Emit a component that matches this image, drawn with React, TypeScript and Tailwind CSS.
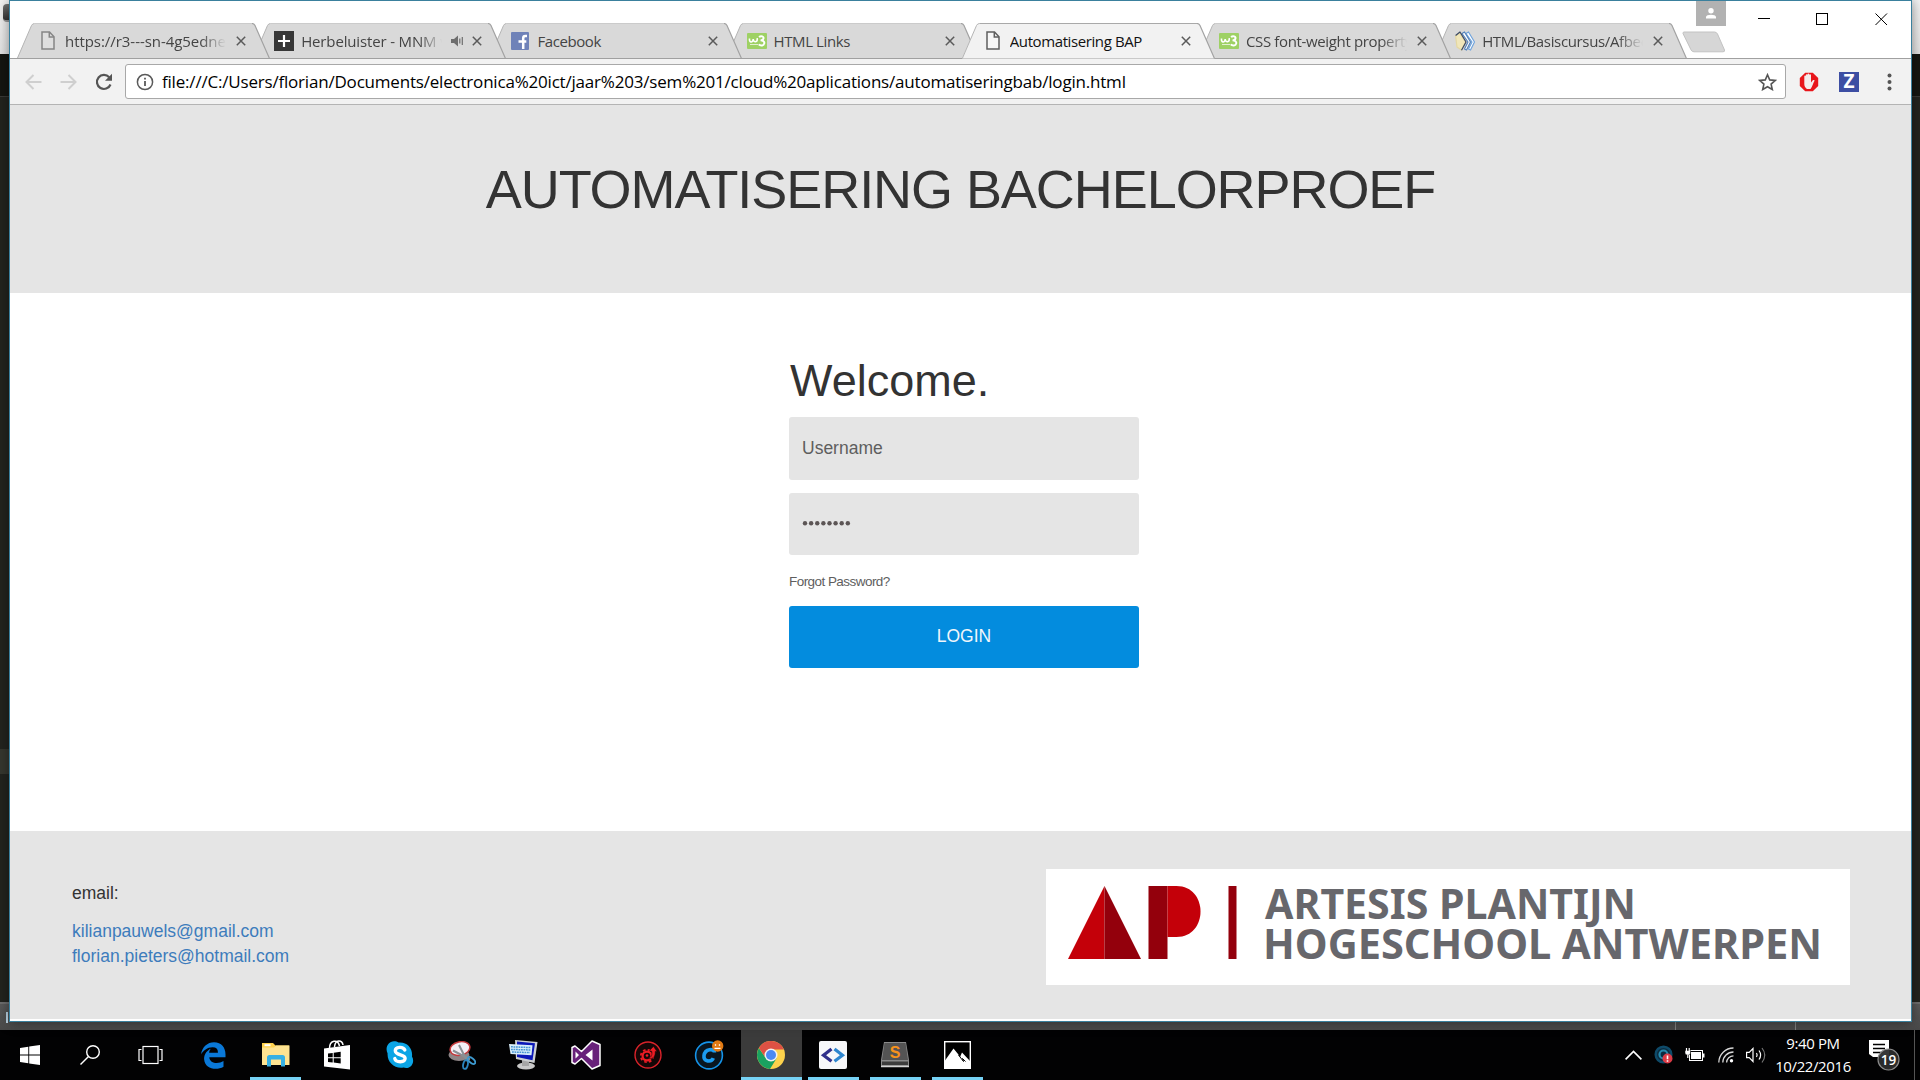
import React from "react";

type Kids = { children?: React.ReactNode };

/* ---------- favicons ---------- */

const PageIcon = ({ dark }: { dark?: boolean }) => (
  <svg width="14" height="19" viewBox="0 0 14 19" fill={dark ? "#f7f7f7" : "#dedede"} stroke={dark ? "#5f5f5f" : "#858585"} strokeWidth="1.5">
    <path d="M1 1h7.5L13 5.8V18H1z" />
    <path d="M8.3 1v5H13" fill="none" />
  </svg>
);

const PlusIcon = () => (
  <svg width="20" height="20" viewBox="0 0 20 20">
    <rect width="20" height="20" fill="#373737" />
    <path d="M10 4v12M4 10h12" stroke="#fff" strokeWidth="2.2" />
  </svg>
);

const FacebookIcon = () => (
  <svg width="18" height="18" viewBox="0 0 18 18">
    <rect width="18" height="18" rx="1" fill="#6f82b8" />
    <path d="M16 4h-1.6c-1.6 0-2.2.8-2.2 2.2V17M7.500 9.500h7.800" stroke="#fff" strokeWidth="2.500" fill="none" />
  </svg>
);

const W3Icon = () => (
  <svg width="20" height="16" viewBox="0 0 20 16">
    <rect width="20" height="16" rx="1" fill="#9ed164" />
    <path d="M2.500 5.500c-.5 4.500 3.500 4.500 3.700.6.300 3.900 4.600 3.500 4-1" fill="none" stroke="#fff" strokeWidth="1.600" />
    <path d="M12 4c2-1.500 5-.8 4.500 1.500-.3 1.500-2 1.900-3 1.900 2.500 0 4.200 1 3.800 3-.5 2.600-4 2.600-5.600 1" fill="none" stroke="#fff" strokeWidth="1.900" />
    <path d="M3 11.500h8" stroke="#fff" strokeWidth="1" opacity=".7" />
  </svg>
);

const BooksIcon = () => (
  <svg width="20" height="20" viewBox="0 0 20 20" strokeWidth="1.200" strokeLinejoin="round">
    <path d="M11 2.500l2.500-1.500L19.500 11l-4 8-2-1L17 11z" fill="#fff" stroke="#6fa3dc" />
    <path d="M7 2.500l2.500-1.500L15.500 11l-4 8-2-1L13 11z" fill="#fff" stroke="#5583bb" />
    <path d="M.6 5L4.500 2l6 9L6.500 19l-4.500-3z" fill="#f0e6ba" stroke="#e4d7a1" />
    <path d="M.6 4.500L5 1l6 10-4.500 8.300" fill="none" stroke="#3b4a66" />
  </svg>
);

const Speaker = () => (
  <svg width="13" height="12" viewBox="0 0 13 12" fill="#6e6e6e">
    <path d="M0 4h3l4-3.500v11L3 8H0z" />
    <path d="M8.800 3.500v5M11.300 2v8" stroke="#6e6e6e" strokeWidth="1.200" />
  </svg>
);

/* ---------- tab strip ---------- */

type TabData = {
  title: string;
  icon: React.ReactNode;
  z: string;
  spacing: string;
  active?: boolean;
  fade?: boolean;
  audio?: boolean;
};

const tabs: TabData[] = [
  { title: "https://r3---sn-4g5ednek", icon: <PageIcon />, z: "z-[7]", spacing: "tracking-[-0.05px]", fade: true },
  { title: "Herbeluister - MNM v", icon: <PlusIcon />, z: "z-[6]", spacing: "tracking-[-0.15px]", fade: true, audio: true },
  { title: "Facebook", icon: <FacebookIcon />, z: "z-[5]", spacing: "tracking-[-0.4px]" },
  { title: "HTML Links", icon: <W3Icon />, z: "z-[4]", spacing: "tracking-[-0.4px]" },
  { title: "Automatisering BAP", icon: <PageIcon dark />, z: "z-[8]", spacing: "tracking-[-0.4px]", active: true },
  { title: "CSS font-weight property", icon: <W3Icon />, z: "z-[3]", spacing: "tracking-[-0.35px]", fade: true },
  { title: "HTML/Basiscursus/Afbeeld", icon: <BooksIcon />, z: "z-[2]", spacing: "tracking-[-0.35px]", fade: true },
];

function Tab({ tab }: { tab: TabData }) {
  const fill = tab.active ? "#f2f2f2" : "#d9d9d9";
  return (
    <div className={`relative -mr-4 flex h-9 w-[252.2px] shrink-0 items-center pb-px pl-[21px] ${tab.z}`}>
      <svg className="absolute inset-0" width="253" height="36" viewBox="0 0 253 36">
        <path d="M0 35.500L14.500 2.500Q15.500.5 17.500.5H235Q237 .5 238 2.500L252.500 35.500z" fill={fill} />
        <path d="M.3 35.500L14.500 2.500Q15.500.5 17.500.5" fill="none" stroke="#b5b5b5" />
        <path d="M17.500.5H235" stroke={tab.active ? "#a9a9a9" : "#cbcbcb"} />
        <path d="M235 .5Q237 .5 238 2.500L252.500 35.500" fill="none" stroke="#a2a2a2" strokeWidth="1.200" />
        {!tab.active && <path d="M0 35.500H253" stroke="#a0a0a0" />}
      </svg>
      <span className="relative flex w-5 shrink-0 justify-center">{tab.icon}</span>
      <span
        className={`relative ml-[7px] overflow-hidden whitespace-nowrap text-[15px] leading-5 ${tab.spacing} ${tab.audio ? "w-[141px]" : "w-[161px]"} ${
          tab.active ? "text-[#111]" : "text-[#444]"
        } ${tab.fade ? "[mask-image:linear-gradient(to_right,black_84%,transparent)]" : ""}`}
      >
        {tab.title}
      </span>
      {tab.audio && (
        <span className="relative ml-[9px] w-3">
          <Speaker />
        </span>
      )}
      <svg className={`relative ${tab.audio ? "ml-[9px]" : "ml-[10px]"}`} width="10" height="10" viewBox="0 0 10 10" stroke="#5a5a5a" strokeWidth="1.500">
        <path d="M.8.8l8.400 8.400M9.200.8L.8 9.200" />
      </svg>
    </div>
  );
}

function TitleBar() {
  return (
    <div className="flex h-[58px] items-start border-b border-[#a0a0a0] bg-white">
      <div className="-mb-px flex pl-[7px] pt-[22px]">
        {tabs.map((t) => (
          <Tab key={t.title} tab={t} />
        ))}
      </div>
      <svg className="-mr-[44px] ml-[12px] mt-[30px] shrink-0" width="44" height="22" viewBox="0 0 44 22">
        <path d="M2 1h30.500q2 0 3 2l7 16q.500 1.800-1.500 1.800H12q-2 0-3-2L1 2.500Q.8 1 2 1z" fill="#d6d6d6" stroke="#c2c2c2" />
      </svg>
      <div className="ml-auto flex items-start pr-[23px]">
        <div className="flex h-[25px] w-[30px] items-center justify-center bg-[#b2b2b2]">
          <svg width="10" height="11" viewBox="0 0 10 11" fill="#fff">
            <circle cx="5" cy="2.700" r="2.700" />
            <path d="M0 10.500V9c0-3 10-3 10 0v1.500z" />
          </svg>
        </div>
        <svg className="ml-8 mt-3" width="130" height="13" viewBox="0 0 130 13" fill="none" stroke="#000">
          <path d="M0 5.500h12" />
          <rect x="58.500" y=".5" width="11" height="11" />
          <path d="M117.500.5l11.500 11.500M129 .5L117.500 12" />
        </svg>
      </div>
    </div>
  );
}

/* ---------- toolbar ---------- */

function Toolbar() {
  return (
    <div className="flex h-[46px] items-center border-b border-[#b4b4b4] bg-[#f2f2f2] pl-[15px]">
      <svg width="17" height="16" viewBox="0 0 17 16" fill="none" stroke="#cfcfcf" strokeWidth="2">
        <path d="M16.500 8H2M8.500 1L1.500 8l7 7" />
      </svg>
      <svg className="ml-[18px]" width="17" height="16" viewBox="0 0 17 16" fill="none" stroke="#cfcfcf" strokeWidth="2">
        <path d="M.5 8H15M8.500 1l7 7-7 7" />
      </svg>
      <svg className="ml-[18px]" width="18" height="18" viewBox="0 0 18 18">
        <path d="M15.500 11.500A7 7 0 1 1 14.200 4.300" fill="none" stroke="#555" strokeWidth="2.200" />
        <path d="M17 .8v7h-7z" fill="#555" />
      </svg>
      <div className="ml-3 flex h-[35px] w-[1661px] items-center rounded-[3px] border border-[#a8a8a8] bg-white pl-[10px] pr-[8px]">
        <svg width="18" height="18" viewBox="0 0 18 18" fill="none" stroke="#5a5a5a">
          <circle cx="9" cy="9" r="7.600" strokeWidth="1.500" />
          <path d="M9 8v5M9 4.800v1.800" strokeWidth="1.800" />
        </svg>
        <span className="ml-[8px] flex-1 whitespace-nowrap text-[17px] leading-6 text-black tracking-[-0.195px]">
          file:///C:/Users/florian/Documents/electronica%20ict/jaar%203/sem%201/cloud%20aplications/automatiseringbab/login.html
        </span>
        <svg width="19" height="18" viewBox="0 0 19 18" fill="none" stroke="#555" strokeWidth="1.600">
          <path d="M9.500 1.800l2.200 5.100 5.600.5-4.200 3.700 1.200 5.400-4.800-2.800-4.800 2.800 1.200-5.400L1.700 7.400l5.600-.5z" />
        </svg>
      </div>
      <svg className="ml-[13px]" width="20" height="20" viewBox="0 0 20 20">
        <path d="M6.200.7h7.600l5.400 5.400v7.800l-5.400 5.400H6.200L.8 13.900V6.100z" fill="#e8161b" />
        <path d="M5.300 9.200V4.300c0-1 1.500-1 1.500 0v4V3c0-1.100 1.700-1.100 1.700 0v5-5.800c0-1.100 1.800-1.100 1.800 0V8 3c0-1.100 1.700-1.100 1.700 0v7.500l1.800-2.200c.8-.7 2.200-.3 1.600.7-1.200 2-2.200 6-3.900 8H8c-1.800-1.300-2.700-3-2.700-5z" fill="#f4ecec" />
      </svg>
      <div className="ml-[20px] flex h-5 w-5 items-center justify-center bg-[#3d4ea3] text-[19px] font-bold leading-none text-white">Z</div>
      <svg className="ml-[28px]" width="5" height="18" viewBox="0 0 5 18" fill="#555">
        <circle cx="2.500" cy="2.500" r="2" />
        <circle cx="2.500" cy="9" r="2" />
        <circle cx="2.500" cy="15.500" r="2" />
      </svg>
    </div>
  );
}

/* ---------- web page ---------- */

function ApLogo() {
  return (
    <svg width="804" height="116" viewBox="0 0 804 116" className="bg-white">
      <path d="M58.500 17L22 90h36.500z" fill="#c40009" />
      <path d="M58.500 17L95 90H58.500z" fill="#93000c" />
      <rect x="102.500" y="17" width="19" height="73" fill="#93000c" />
      <path d="M121.500 17h9c32 0 32 51 0 51h-9z" fill="#c40009" />
      <rect x="182.500" y="17" width="8" height="73" fill="#93000c" />
      <g fill="#67676c" fontFamily="'Noto Sans', sans-serif" fontWeight="700" fontSize="42">
        <text x="219" y="49.500" textLength="371" lengthAdjust="spacingAndGlyphs">ARTESIS PLANTIJN</text>
        <text x="217" y="90" textLength="559" lengthAdjust="spacingAndGlyphs">HOGESCHOOL ANTWERPEN</text>
      </g>
    </svg>
  );
}

function WebPage() {
  return (
    <div className="flex flex-1 flex-col bg-white font-['Liberation_Sans',Arial,sans-serif] text-[17.5px] leading-[25px] text-[#333]">
      <header className="flex h-[188px] justify-center bg-[#e5e5e5] pt-[54px]">
        <h1 className="whitespace-nowrap text-[54px] leading-[60px] tracking-[-1.06px]">AUTOMATISERING BACHELORPROEF</h1>
      </header>
      <main className="flex h-[538px] flex-col pl-[779px] pt-[63px]">
        <h2 className="pl-px text-[45px] leading-[50px]">Welcome.</h2>
        <form className="flex w-[350px] flex-col pt-[11px] text-[#5e5e5e]">
          <div className="flex h-[63px] items-center rounded-[3px] bg-[#e5e5e5] pl-[13px]">Username</div>
          <div className="mt-[13px] flex h-[62px] items-center rounded-[3px] bg-[#e5e5e5] pl-[13px]">
            <svg width="50" height="6" viewBox="0 0 50 6" fill="#5c5555">
              {[0, 1, 2, 3, 4, 5, 6, 7].map((i) => (
                <circle key={i} cx={3 + i * 6.12} cy="2.200" r="2.200" />
              ))}
            </svg>
          </div>
          <a className="mt-[18px] text-[13.5px] leading-[18px] tracking-[-0.55px]">Forgot Password?</a>
          <button type="button" className="mt-[15px] h-[62px] rounded-[3px] bg-[#038cde] pb-[2px] text-[17.5px] text-[#f0f6fb]">
            LOGIN
          </button>
        </form>
      </main>
      <footer className="flex h-[188px] items-start justify-between bg-[#e5e5e5] pl-[62px] pr-[61px]">
        <div className="pt-[50px]">
          <p className="mb-[13px]">email:</p>
          <p className="text-[#3d7cbc]">kilianpauwels@gmail.com</p>
          <p className="text-[#3d7cbc]">florian.pieters@hotmail.com</p>
        </div>
        <div className="pt-[38px]">
          <ApLogo />
        </div>
      </footer>
    </div>
  );
}

/* ---------- desktop behind the browser ---------- */

function Backdrop() {
  return (
    <div className="flex h-full flex-col">
      <div className="flex h-[54px] items-start bg-gradient-to-b from-[#f4f4f4] to-[#e4e4e4] pl-[3px] pt-1">
        <div className="h-[18px] w-3 rounded-sm border-b-2 border-[#999] bg-gradient-to-b from-[#777] to-[#333]" />
      </div>
      <div className="h-[42px] bg-[#151611]" />
      <div className="h-[653px] border-t border-[#3a3a37] bg-[#23241f]" />
      <div className="flex h-[25px] justify-between">
        <div className="w-20 bg-[#36372f]" />
        <div className="w-20 bg-[#23241f]" />
      </div>
      <div className="h-[228px] bg-[#23241f]" />
      <div className="flex flex-1 border-t-2 border-[#6f6f6f] bg-gradient-to-b from-[#5a5a5a] to-[#494949]">
        <div className="ml-[6px] mt-2 h-[11px] w-[2px] bg-[#bcd5e6]" />
        <div className="ml-[1667px] w-px bg-[#808080]" />
        <div className="ml-[119px] w-px bg-[#808080]" />
      </div>
    </div>
  );
}

/* ---------- taskbar ---------- */

const WindowsLogo = () => (
  <svg width="20" height="20" viewBox="0 0 20 20" fill="#fff">
    <path d="M0 2.900L8.300 1.700V9.500H0zM9.200 1.600L20 0v9.500H9.200zM0 10.400h8.300v7.900L0 17.100zM9.200 10.400H20V20L9.200 18.400z" />
  </svg>
);

const SearchGlyph = () => (
  <svg width="20" height="20" viewBox="0 0 20 20" fill="none" stroke="#fff" strokeWidth="1.400">
    <circle cx="13" cy="7" r="6.300" />
    <path d="M8.500 11.500L.5 19.500" />
  </svg>
);

const TaskView = () => (
  <svg width="25" height="20" viewBox="0 0 25 20" fill="none" stroke="#fff" strokeWidth="1.200">
    <rect x="5" y="1.500" width="15" height="17" />
    <path d="M3.500 4.500H1v11h2.500M21.500 4.500H24v11h-2.500" />
  </svg>
);

const Edge = () => (
  <svg width="25" height="27" viewBox="0 0 25 27" fill="#0a78d7">
    <path d="M0 12.500C1 5 6.500.3 13 .3c7.500 0 11.500 5.500 11.500 12v3H8.300c.4 6.700 9.500 7 14.200 3.800v5.700c-7 4-18.700 2.400-19.400-7.500C2.800 12 6.500 8 9.800 6.700 8.600 8 8.200 9.500 8.200 10.800h8.700c.2-3.500-1.500-5.500-5.200-5.500C6.500 5.200 2.300 8.600 0 12.500z" />
  </svg>
);

const Explorer = () => (
  <svg width="28" height="25" viewBox="0 0 28 25">
    <path d="M0 0h11l2.500 2.500H27V6H0z" fill="#ffd24d" />
    <rect x="2.500" y="1.200" width="6" height="2" fill="#fff" />
    <path d="M0 4.500h12l2-2h13.500V22H0z" fill="#fee391" />
    <path d="M5 23.500v-9q0-2.500 2.500-2.500h13q2.500 0 2.500 2.500v9h-4v-7H9v7z" fill="#36b0e4" />
  </svg>
);

const Store = () => (
  <svg width="27" height="30" viewBox="0 0 27 30">
    <path d="M5.500 8.500C5.500-.5 14-1 15.500 6M10.500 7C11-1 18.500-.5 19 5" fill="none" stroke="#fff" strokeWidth="1.500" />
    <path d="M0 8.500L26 5v24.500L0 26.500z" fill="#fff" />
    <path d="M4 13.500l4.700-.6v4.300H4zM9.700 12.800l7-1v5.400h-7zM4 18.200h4.700v4.300L4 22zM9.700 18.200h7v5.400l-7-1z" fill="#000" />
  </svg>
);

const Skype = () => (
  <svg width="28" height="28" viewBox="0 0 28 28">
    <path d="M8 .3c2 0 3.300.5 4.600 1.300C21 .6 27 7.500 26 15.500c3.500 6-1.500 13.500-8.600 11C8.500 28 1 21 1.600 12.500-1.200 7 2 .5 8 .3z" fill="#0ba5e6" />
    <path d="M18.800 9C17.200 5.300 9.300 5.500 9.300 9.800c0 5 9.800 3.100 9.800 7.500 0 4.600-9.200 4.400-10.300.3" fill="none" stroke="#fff" strokeWidth="3.400" strokeLinecap="round" />
  </svg>
);

const Snipping = () => (
  <svg width="28" height="29" viewBox="0 0 28 29">
    <ellipse cx="11" cy="14" rx="10.500" ry="6" fill="#8e8587" />
    <ellipse cx="12" cy="7.500" rx="10" ry="6.700" fill="#f4eef5" stroke="#c5393c" strokeWidth="1.500" transform="rotate(-12 12 7.500)" />
    <path d="M11 4l8 16M5 9.500l17 9" stroke="#8a8f94" strokeWidth="2" />
    <ellipse cx="17.500" cy="23.500" rx="2.300" ry="4.500" fill="none" stroke="#2c86bf" strokeWidth="1.800" transform="rotate(12 17.500 23.500)" />
    <ellipse cx="23.500" cy="19.500" rx="2.300" ry="4.500" fill="none" stroke="#3d9ad0" strokeWidth="1.800" transform="rotate(-50 23.500 19.500)" />
  </svg>
);

const RemoteKeyboard = () => (
  <svg width="29" height="30" viewBox="0 0 29 30">
    <ellipse cx="17" cy="26" rx="9" ry="3.500" fill="#c9c9c9" />
    <path d="M13 20h7v6h-7z" fill="#a6a6a6" />
    <path d="M6 0l22.500 2-3 21L7 19z" fill="#cdd0d2" />
    <path d="M8 1.500l18 1.700-2.500 17L8 17z" fill="#0b18b8" />
    <path d="M0 4l23.500 1.300-1 10L1.500 14z" fill="#d8eefa" />
    <path d="M2 6.800l20 .8M2 9.400l19.500.6M3 12l18 .6" stroke="#4794d4" strokeWidth="1.500" strokeDasharray="1.800 .7" />
  </svg>
);

const VisualStudio = () => (
  <svg width="30" height="30" viewBox="0 0 30 30" strokeLinejoin="round">
    <path d="M21 1l8 3.500v21L21 29 10.500 18.500 4 24l-3-1.500v-15L4 6l6.500 5.500z" fill="#68217a" stroke="#fff" strokeWidth="1.500" />
    <path d="M21.500 9.500v11L14.500 15zM4.500 11.500v7L8 15z" fill="#fff" />
  </svg>
);

const RedGear = () => (
  <svg width="28" height="28" viewBox="0 0 28 28">
    <circle cx="14" cy="14" r="13" fill="#150707" stroke="#d9232a" strokeWidth="1.400" />
    <circle cx="13" cy="15" r="4.400" fill="none" stroke="#ed1c24" strokeWidth="2.200" />
    <circle cx="13" cy="15" r="6.200" fill="none" stroke="#ed1c24" strokeWidth="1.800" strokeDasharray="2.600 2.270" />
    <path d="M15.500 9.500L19.500 5.500l3.500 5h-1.800c.5 5.500-3 8.500-7.700 6.500 3.500 0 5-2.500 4.300-6.500z" fill="#ed1c24" stroke="#150707" strokeWidth=".5" />
    <circle cx="13" cy="14.500" r="1.300" fill="#ed1c24" />
  </svg>
);

const CIcon = () => (
  <svg width="30" height="30" viewBox="0 0 30 30">
    <circle cx="15" cy="15.500" r="13.400" fill="#091620" stroke="#1593e8" strokeWidth="1.600" />
    <path d="M20.500 12.500c-.2-4.500-9.500-4-10.500 3-.8 6.500 7.500 7 9.300 2.600" fill="none" stroke="#1c9cf0" strokeWidth="3.600" />
    <circle cx="23.700" cy="6" r="5.700" fill="#e27a13" />
    <path d="M21.500 4.200v1.600M25.500 4.200v1.600M20.500 8.300h6" stroke="#fff" strokeWidth="1.300" />
  </svg>
);

const Chrome = () => (
  <svg width="28" height="28" viewBox="0 0 28 28">
    <circle cx="14" cy="14" r="14" fill="#fdd24c" />
    <path d="M1.900 7A14 14 0 0 0 13 28l6.500-10.500-5.500-3.500-6 2z" fill="#1aa260" />
    <path d="M1.900 7A14 14 0 0 1 26.900 8.500H14L8 16z" fill="#dd5144" />
    <circle cx="14" cy="14" r="6.500" fill="#f1f1f1" />
    <circle cx="14" cy="14" r="5" fill="#4a89f3" />
  </svg>
);

const Brackets = () => (
  <svg width="28" height="28" viewBox="0 0 28 28">
    <rect width="28" height="28" rx="2" fill="#f7f8fa" />
    <path d="M12.500 8L4.500 14.200l8 6" fill="none" stroke="#30308a" strokeWidth="3.200" />
    <path d="M15.500 8l8 6.200-8 6" fill="none" stroke="#2e86cf" strokeWidth="3.200" />
  </svg>
);

const Sublime = () => (
  <svg width="28" height="26" viewBox="0 0 28 26">
    <path d="M3 0h22l3 18v7H0v-7z" fill="#8a8a8a" />
    <path d="M3.500 1h21L27 18H1z" fill="#545454" />
    <path d="M1 19.500h26V23H1z" fill="#3c3c3c" />
    <path d="M0 24.500h28" stroke="#d4d4d4" strokeWidth="1.500" />
    <text x="14" y="15.500" textAnchor="middle" fontSize="16" fontWeight="700" fill="#f8921b" fontFamily="'Liberation Sans', sans-serif">S</text>
  </svg>
);

const Photos = () => (
  <svg width="27" height="28" viewBox="0 0 27 28">
    <rect x=".7" y=".7" width="25.600" height="26.600" fill="#000" stroke="#fff" strokeWidth="1.400" />
    <path d="M1 19.500L9.500 7.500 14 13l2 3 2-4.500 8 8.500v7H1z" fill="#fff" />
    <path d="M14.500 14l5 6.500-1-3 3 3" fill="none" stroke="#000" strokeWidth="1" />
  </svg>
);

const apps: { icon: React.ReactNode; state?: "open" | "active" }[] = [
  { icon: <Edge /> },
  { icon: <Explorer />, state: "open" },
  { icon: <Store /> },
  { icon: <Skype /> },
  { icon: <Snipping /> },
  { icon: <RemoteKeyboard /> },
  { icon: <VisualStudio /> },
  { icon: <RedGear /> },
  { icon: <CIcon /> },
  { icon: <Chrome />, state: "active" },
  { icon: <Brackets />, state: "open" },
  { icon: <Sublime />, state: "open" },
  { icon: <Photos />, state: "open" },
];

const Slot = ({ children }: Kids) => <div className="flex h-full w-[60px] items-center justify-center">{children}</div>;

function Taskbar() {
  return (
    <div className="flex h-[50px] items-stretch bg-[#020203] text-white">
      <Slot><WindowsLogo /></Slot>
      <Slot><SearchGlyph /></Slot>
      <Slot><TaskView /></Slot>
      <div className="ml-[3px] flex">
        {apps.map((a, i) => (
          <div key={i} className="flex w-[61.950px] flex-col items-center">
            <div className={`flex h-[47px] items-center justify-center pt-[3px] ${a.state === "active" ? "w-[61px] bg-[#3b3b3b]" : "w-[51px]"}`}>{a.icon}</div>
            {a.state && <div className={`h-[3px] bg-[#76d2f5] ${a.state === "active" ? "w-[61px]" : "w-[51px]"}`} />}
          </div>
        ))}
      </div>
      <div className="ml-auto flex items-center">
        <svg className="mr-[12px]" width="17" height="10" viewBox="0 0 17 10" fill="none" stroke="#fff" strokeWidth="1.600">
          <path d="M.6 9.400l7.900-8 7.900 8" />
        </svg>
        <svg className="mr-[11px]" width="20" height="20" viewBox="0 0 20 20">
          <circle cx="9.500" cy="9.500" r="7.800" fill="#0c2c40" stroke="#0e4a69" strokeWidth="2.500" />
          <circle cx="9.500" cy="9.500" r="4" fill="none" stroke="#2588ac" strokeWidth="2.200" />
          <circle cx="13.500" cy="13.500" r="5" fill="#dc3b46" />
          <path d="M13.500 10.500v3.700M13.500 15.200v1.600" stroke="#fff" strokeWidth="1.600" />
        </svg>
        <svg className="mr-[13px]" width="20" height="14" viewBox="0 0 20 14">
          <rect x="4.500" y="2.500" width="13" height="10" fill="none" stroke="#fff" />
          <rect x="6" y="4" width="10" height="7" fill="#fff" />
          <path d="M18 5.500h1.500v4H18z" fill="#fff" />
          <path d="M0 2.500h5.500v2c0 2-1.200 2.500-2.700 2.500S0 6.500 0 4.500z" fill="#fff" stroke="#000" strokeWidth=".5" />
          <path d="M1.500 0v3M4.200 0v3M2.800 6.500V10" stroke="#fff" strokeWidth="1.200" />
        </svg>
        <svg className="mr-[12px]" width="16" height="16" viewBox="0 0 16 16" fill="none" stroke="#d8d8d8" strokeWidth="1.300">
          <path d="M.8 15.500A14.700 14.700 0 0 1 15.500 1" />
          <path d="M4.800 15.500A10.700 10.700 0 0 1 15.500 5" />
          <path d="M8.600 15.500A7 7 0 0 1 15.500 8.800" />
          <circle cx="13.500" cy="13.800" r="1.700" fill="#fff" stroke="none" />
        </svg>
        <svg className="mr-[9px]" width="20" height="18" viewBox="0 0 20 18" fill="none" stroke="#fff" strokeWidth="1.200">
          <path d="M.6 6.300h2.600L7 2.500v13l-3.800-3.800H.6z" />
          <path d="M10.500 7q1.300 2 0 4M13 4.500q3.200 4.500 0 9" />
          <path d="M16 2q5.500 7 0 14.500" stroke="#777" />
        </svg>
        <div className="flex w-[76px] flex-col items-center text-[15px] leading-[23px] tracking-[-0.4px] whitespace-nowrap">
          <span>9:40 PM</span>
          <span>10/22/2016</span>
        </div>
        <svg className="ml-[17px]" width="33" height="32" viewBox="0 0 33 32">
          <path d="M1 1h20v17H9l-4 0-4-3z" fill="#fff" />
          <path d="M5 5.500h12M5 9.500h12M5 13.500h8" stroke="#000" strokeWidth="1.300" />
          <circle cx="20.500" cy="20.500" r="10.500" fill="#2c2c2c" fillOpacity=".95" stroke="#8a8a8a" strokeWidth="1.200" />
          <text x="20.500" y="25.500" textAnchor="middle" fontSize="13.500" fontWeight="600" fill="#fff" fontFamily="'Open Sans', sans-serif">19</text>
        </svg>
        <div className="ml-[13px] mr-[5px] h-[50px] w-px bg-[#555]" />
      </div>
    </div>
  );
}

export default function App() {
  return (
    <div className="flex h-[1080px] w-[1920px] flex-col overflow-hidden bg-black font-['Open_Sans','Noto_Sans',sans-serif]">
      <div className="relative h-[1030px]">
        <Backdrop />
        <div className="absolute left-[9px] top-0 flex h-[1022px] w-[1903px] flex-col border border-[#3a809d] bg-white shadow-[0_0_12px_rgba(0,0,0,0.45)]">
          <TitleBar />
          <Toolbar />
          <WebPage />
        </div>
      </div>
      <Taskbar />
    </div>
  );
}
